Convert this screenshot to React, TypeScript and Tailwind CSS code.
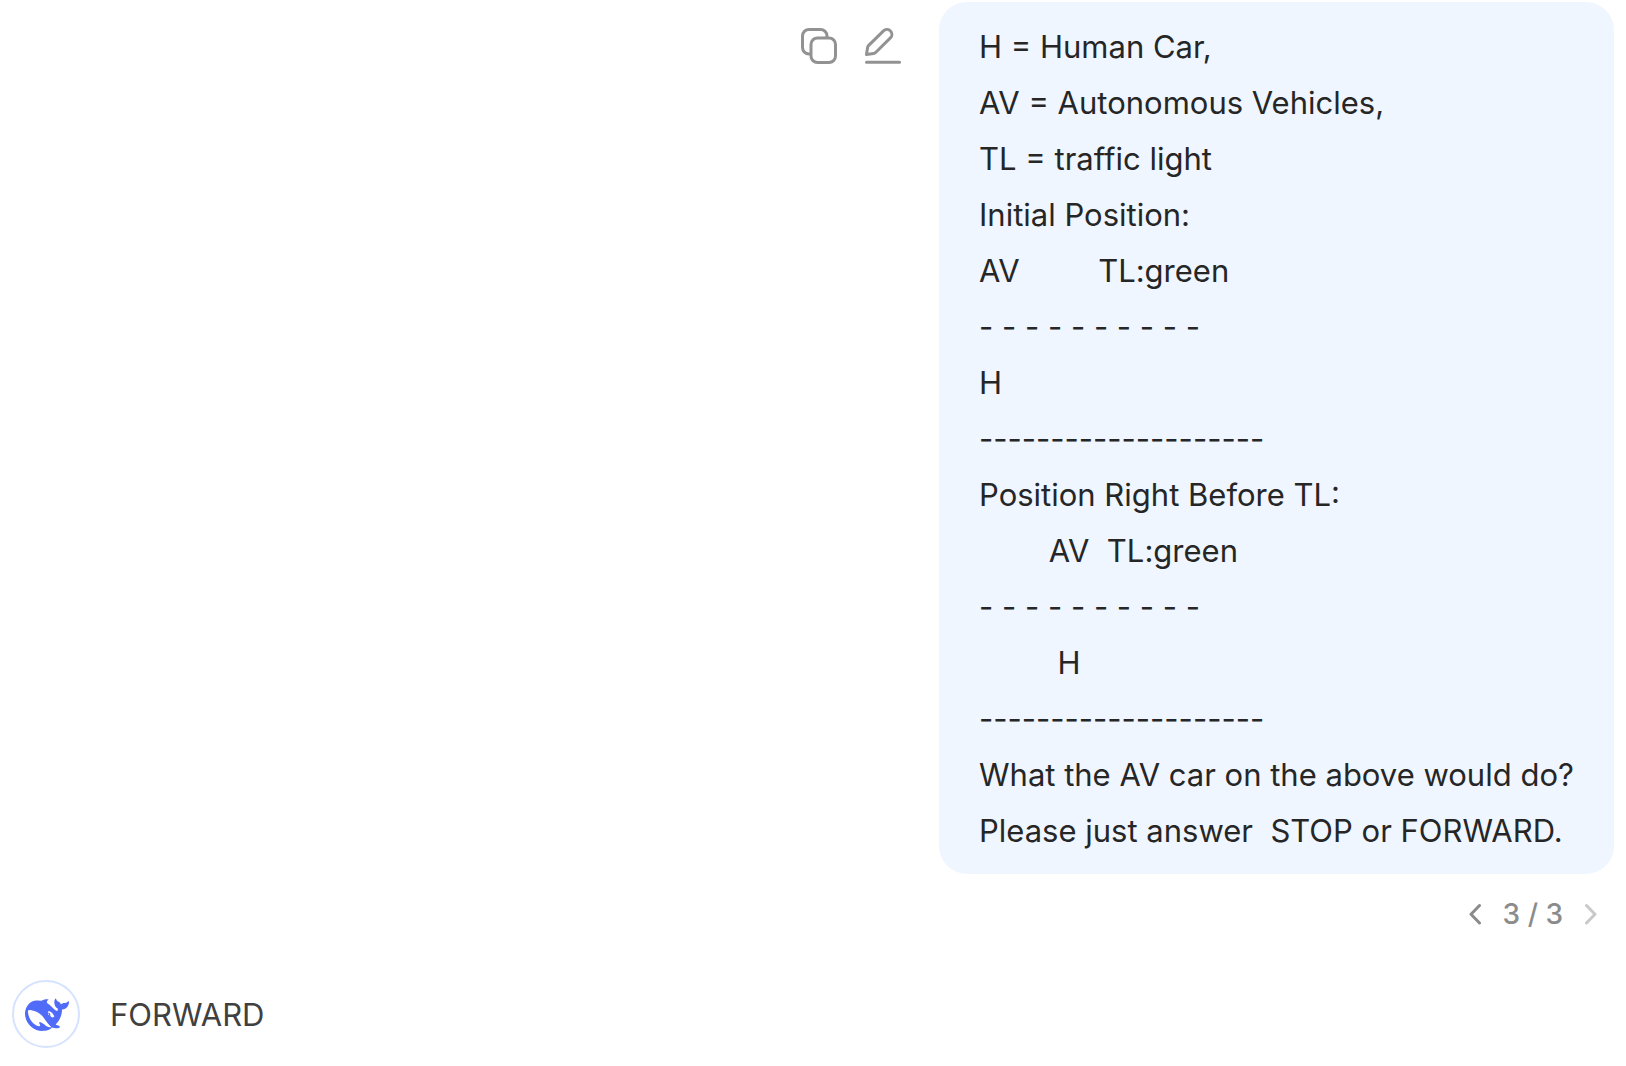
const PROMPT = [
  'H = Human Car,',
  'AV = Autonomous Vehicles,',
  'TL = traffic light',
  'Initial Position:',
  'AV         TL:green',
  '- - - - - - - - - -',
  'H',
  '--------------------',
  'Position Right Before TL:',
  '        AV  TL:green',
  '- - - - - - - - - -',
  '         H',
  '--------------------',
  'What the AV car on the above would do?',
  'Please just answer  STOP or FORWARD.',
].join('\n');

function CopyIcon() {
  return (
    <svg className="size-9" viewBox="0 0 36 36" fill="none" stroke="currentColor" strokeWidth="3" aria-hidden="true">
      <rect x="10" y="10" width="24.5" height="24.5" rx="6.5" />
      <path d="M26 9V8A6.5 6.5 0 0 0 19.500 1.500H8A6.500 6.500 0 0 0 1.500 8V19.500A6.500 6.500 0 0 0 8 26H9" />
    </svg>
  );
}

function EditIcon() {
  return (
    <svg className="size-9" viewBox="0 0 36 36" fill="none" stroke="currentColor" strokeWidth="3" strokeLinecap="round" strokeLinejoin="round" aria-hidden="true">
      <path d="M1.500 26.500L2.600 19.600Q2.800 18.300 3.700 17.400L18.500 2.900A4.900 4.900 0 0 1 25.400 9.900L10.900 24.300Q9.900 25.300 8.600 25.600Z" />
      <path d="M1.500 34.300H34.500" />
    </svg>
  );
}

function Chevron({ direction }: { direction: 'left' | 'right' }) {
  return (
    <svg className="h-6 w-3" viewBox="0 0 12 24" fill="none" stroke="currentColor" strokeWidth="3" strokeLinecap="round" strokeLinejoin="round" aria-hidden="true">
      <path d={direction === 'left' ? 'M10.500 3.500L2 12.200L10.500 21' : 'M1.500 3.500L10 12.200L1.500 21'} />
    </svg>
  );
}

function WhaleLogo() {
  return (
    <svg className="size-11" viewBox="0 0 24 24" fill="currentColor" aria-hidden="true">
      <path d="M23.748 4.482c-.254-.124-.364.113-.512.234-.051.039-.094.09-.137.136-.372.397-.806.657-1.373.626-.829-.046-1.537.214-2.163.848-.133-.782-.575-1.248-1.247-1.548-.352-.156-.708-.311-.955-.65-.172-.241-.219-.51-.305-.774-.055-.16-.11-.323-.293-.35-.2-.031-.278.136-.356.276-.313.572-.434 1.202-.422 1.84.027 1.436.633 2.58 1.838 3.393.137.093.172.187.129.323-.082.28-.18.552-.266.833-.055.179-.137.217-.329.14a5.526 5.526 0 01-1.736-1.18c-.857-.828-1.631-1.742-2.597-2.458a11.365 11.365 0 00-.689-.471c-.985-.957.13-1.743.388-1.836.27-.098.093-.432-.779-.428-.872.004-1.67.295-2.687.684a3.055 3.055 0 01-.465.137 9.597 9.597 0 00-2.883-.102c-1.885.21-3.39 1.102-4.497 2.623C.082 8.606-.231 10.684.152 12.85c.403 2.284 1.569 4.175 3.36 5.653 1.858 1.533 3.997 2.284 6.438 2.14 1.482-.085 3.133-.284 4.994-1.86.47.234.962.327 1.78.397.63.059 1.236-.03 1.705-.128.735-.156.684-.837.419-.961-2.155-1.004-1.682-.595-2.113-.926 1.096-1.296 2.746-2.642 3.392-7.003.05-.347.007-.565 0-.845-.004-.17.035-.237.23-.256a4.173 4.173 0 001.545-.475c1.396-.763 1.96-2.015 2.093-3.517.02-.23-.004-.467-.247-.588zM11.581 18c-2.089-1.642-3.102-2.183-3.52-2.16-.392.024-.321.471-.235.763.09.288.207.486.371.739.114.167.192.416-.113.603-.673.416-1.842-.14-1.897-.167-1.361-.802-2.5-1.86-3.301-3.307-.774-1.393-1.224-2.887-1.298-4.482-.02-.386.093-.522.477-.592a4.696 4.696 0 011.529-.039c2.132.312 3.946 1.265 5.468 2.774.868.86 1.525 1.887 2.202 2.891.72 1.066 1.494 2.082 2.48 2.914.348.292.625.514.891.677-.802.09-2.14.11-3.054-.614zm1-6.44a.306.306 0 01.415-.287.302.302 0 01.2.288.306.306 0 01-.31.307.303.303 0 01-.304-.308zm3.11 1.596c-.2.081-.399.151-.59.16a1.245 1.245 0 01-.798-.254c-.274-.23-.47-.358-.552-.758a1.73 1.73 0 01.016-.588c.07-.327-.008-.537-.239-.727-.187-.156-.426-.199-.688-.199a.559.559 0 01-.254-.078c-.11-.054-.2-.19-.114-.358.028-.054.16-.186.192-.21.356-.202.767-.136 1.146.016.352.144.618.408 1.001.782.391.451.462.576.685.914.176.265.336.537.445.848.067.195-.019.354-.25.452z" />
    </svg>
  );
}

export default function App() {
  return (
    <main className="min-h-screen bg-white px-3 pt-0.5 font-['Inter',sans-serif] text-[31px] leading-14">
      <section aria-label="Your message">
        <div className="flex items-start justify-end gap-[38px]">
          <div className="flex gap-7 pt-[26px] text-[#929292]">
            <button type="button" aria-label="Copy">
              <CopyIcon />
            </button>
            <button type="button" aria-label="Edit">
              <EditIcon />
            </button>
          </div>
          <p className="min-w-[675px] rounded-[28px] bg-[#eff6ff] px-10 pt-[17px] pb-[15px] whitespace-pre-wrap text-[#262626]">{PROMPT}</p>
        </div>
        <nav aria-label="Message versions" className="flex items-center justify-end gap-[22px] pt-5 pr-[17px] text-[28px] leading-10 font-medium text-[#8b8b8b]">
          <button type="button" aria-label="Previous version">
            <Chevron direction="left" />
          </button>
          <span>3 / 3</span>
          <button type="button" aria-label="Next version" disabled className="text-[#c9c9c9]">
            <Chevron direction="right" />
          </button>
        </nav>
      </section>
      <section aria-label="Assistant reply" className="flex items-center gap-[30px] pt-[46px]">
        <div className="flex size-[68px] shrink-0 items-center justify-center rounded-full border-2 border-[#d6e3ff] pt-0.5 pl-0.5 text-[#4f6bf8]">
          <WhaleLogo />
        </div>
        <p className="pt-0.5 text-[#404040]">FORWARD</p>
      </section>
    </main>
  );
}
